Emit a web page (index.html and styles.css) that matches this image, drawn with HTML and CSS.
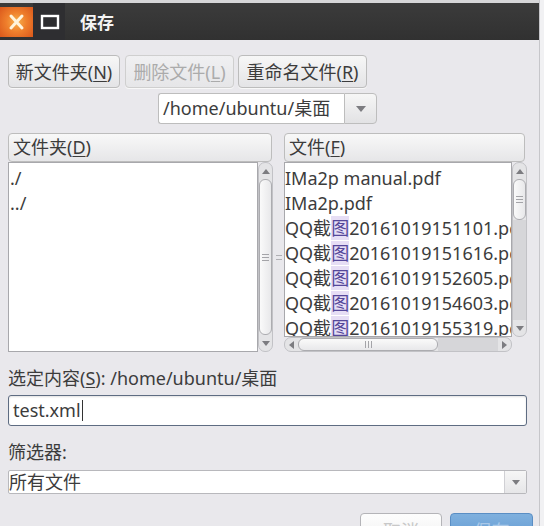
FILE: index.html
```html
<!DOCTYPE html>
<html>
<head>
<meta charset="utf-8">
<link rel="stylesheet" href="styles.css">
</head>
<body>
<div class="window">
  <div class="titlebar">
    <div class="close">
      <svg width="33" height="30" viewBox="0 0 33 30"><path d="M11 9 L22 21 M22 9 L11 21" stroke="#fff4dc" stroke-width="3" stroke-linecap="round"/></svg>
    </div>
    <div class="maxbtn">
      <svg width="32" height="30" viewBox="0 0 32 30"><rect x="9" y="9" width="16" height="12" fill="none" stroke="#ffffff" stroke-width="2.4"/></svg>
    </div>
    <div class="title">保存</div>
  </div>

  <div class="main">
    <div class="toolbar">
      <div class="btn b1">新文件夹(<u>N</u>)</div>
      <div class="btn b2 disabled">删除文件(<u>L</u>)</div>
      <div class="btn b3">重命名文件(<u>R</u>)</div>
    </div>

    <div class="pathrow">
      <div class="pathtext">/home/ubuntu/桌面</div>
      <div class="pathbtn"><span class="tri-down"></span></div>
    </div>

    <div class="panes">
      <div class="pane left">
        <div class="header hl-left">文件夹(<u>D</u>)</div>
        <div class="listwrap">
          <div class="list dirs">
            <div class="item">./</div>
            <div class="item">../</div>
          </div>
          <div class="vscroll">
            <div class="arrow"><span class="tri-up"></span></div>
            <div class="vthumb full"><span class="grip-h"></span></div>
            <div class="arrow"><span class="tri-down sm"></span></div>
          </div>
        </div>
      </div>

      <div class="divider"><span class="handle"></span></div>

      <div class="pane right">
        <div class="header hr-right">文件(<u>F</u>)</div>
        <div class="filegrid">
          <div class="list files">
            <div class="item">IMa2p manual.pdf</div>
            <div class="item">IMa2p.pdf</div>
            <div class="item">QQ截<span class="hl">图</span>20161019151101.pdf</div>
            <div class="item">QQ截<span class="hl">图</span>20161019151616.pdf</div>
            <div class="item">QQ截<span class="hl">图</span>20161019152605.pdf</div>
            <div class="item">QQ截<span class="hl">图</span>20161019154603.pdf</div>
            <div class="item">QQ截<span class="hl">图</span>20161019155319.pdf</div>
          </div>
          <div class="vscroll short">
            <div class="arrow"><span class="tri-up"></span></div>
            <div class="vthumb small"><span class="grip-h"></span></div>
            <div class="trough-v"></div>
            <div class="arrow"><span class="tri-down sm"></span></div>
          </div>
          <div class="hscroll">
            <div class="harrow"><span class="tri-left"></span></div>
            <div class="hthumb"><span class="grip-v"></span></div>
            <div class="trough-h"></div>
            <div class="harrow"><span class="tri-right"></span></div>
          </div>
          <div class="corner"></div>
        </div>
      </div>
    </div>

    <div class="label sel">选定内容(<u>S</u>): /home/ubuntu/桌面</div>
    <div class="entry">test.xml<span class="caret"></span></div>

    <div class="label filt">筛选器:</div>
    <div class="combo">
      <div class="combotext">所有文件</div>
      <div class="combobtn"><span class="tri-down sm"></span></div>
    </div>

    <div class="actions">
      <div class="abtn cancel">取消</div>
      <div class="abtn save">保存</div>
    </div>
  </div>
</div>
</body>
</html>
```

FILE: styles.css
```css
* { box-sizing: border-box; margin: 0; padding: 0; }
html, body {
  width: 544px; height: 526px; overflow: hidden;
  background: #f1f1f3;
}
body {
  font-family: "Noto Sans", "Noto Sans CJK SC", sans-serif;
  color: #3c3c3c;
  font-size: 18px;
}
u { text-decoration-thickness: 1px; text-underline-offset: 2px; }

.window {
  width: 540px; height: 526px;
  background: #e9e8ec;
  border-right: 1px solid #c6c6ca;
  overflow: hidden;
}

/* title bar */
.titlebar {
  height: 40px;
  border-top: 3px solid #d6d6d8;
  background: linear-gradient(#3b3b3b, #313131);
  display: flex; align-items: center;
}
.close {
  width: 33px; height: 30px;
  background: radial-gradient(circle at 50% 50%, #f7b24c 0, #ef7f2c 45%, #da571b 100%);
  display: flex; align-items: center; justify-content: center;
}
.maxbtn {
  width: 32px; height: 37px;
  background: #2e2e31;
  display: flex; align-items: center; justify-content: center;
}
.title {
  margin-left: 15px;
  color: #f4f4f4; font-weight: bold; font-size: 17px;
}

.main { width: 527px; padding: 15px 0 0 8px; }

/* buttons */
.toolbar { display: flex; height: 33px; }
.btn {
  height: 33px;
  border: 1px solid #bcbcbc; border-radius: 4px;
  background: linear-gradient(#f7f7f7, #e4e4e6);
  display: flex; align-items: center; justify-content: center;
  line-height: 1; white-space: nowrap;
  box-shadow: 0 1px 0 #f8f8f8;
}
.b1 { width: 112px; margin-right: 5px; }
.b2 { width: 109px; margin-right: 4px; }
.b3 { width: 129px; }
.disabled { color: #ababab; border-color: #cfcfcf; background: linear-gradient(#f0f0f2, #e6e6e8); }

/* path combo */
.pathrow { margin-top: 5px; display: flex; justify-content: center; height: 31px; }
.pathtext {
  width: 186px; height: 31px;
  background: #fff;
  border: 1px solid #bdbdbd; border-right: none;
  border-radius: 3px 0 0 3px;
  padding-left: 4px; line-height: 29px;
  white-space: nowrap;
}
.pathbtn {
  width: 33px; height: 31px;
  border: 1px solid #bdbdbd; border-radius: 0 4px 4px 0;
  background: linear-gradient(#f6f6f6, #e2e2e4);
  display: flex; align-items: center; justify-content: center;
}

/* triangles */
.tri-down { width: 0; height: 0; border-left: 5px solid transparent; border-right: 5px solid transparent; border-top: 6px solid #7c7c80; }
.tri-down.sm { border-left-width: 4px; border-right-width: 4px; border-top-width: 5px; }
.tri-up { width: 0; height: 0; border-left: 4px solid transparent; border-right: 4px solid transparent; border-bottom: 5px solid #7c7c80; }
.tri-left { width: 0; height: 0; border-top: 4px solid transparent; border-bottom: 4px solid transparent; border-right: 5px solid #7c7c80; }
.tri-right { width: 0; height: 0; border-top: 4px solid transparent; border-bottom: 4px solid transparent; border-left: 5px solid #7c7c80; }

/* panes */
.panes {
  margin-top: 9px;
  display: grid;
  grid-template-columns: 265px 11px 243px;
  height: 219px;
}
.pane { display: flex; flex-direction: column; }
.header {
  height: 29px;
  border: 1px solid #bdbdbd; border-radius: 4px;
  background: linear-gradient(#f8f8f8, #e6e6e8);
  padding-left: 4px; line-height: 27px;
}
.hl-left { width: 264px; }
.hr-right { width: 241px; }

.listwrap { display: flex; height: 190px; }
.list {
  background: #fff;
  border: 1px solid #a8a8ac;
  overflow: hidden;
  padding-top: 3px;
}
.dirs { width: 250px; height: 190px; padding-left: 1px; }
.item { height: 25px; line-height: 25px; white-space: nowrap; }

.vscroll {
  width: 15px;
  background: #e4e4e6;
  border: 1px solid #c2c2c6; border-radius: 7px;
  display: flex; flex-direction: column; align-items: center;
  padding: 0 0;
  overflow: hidden;
}
.arrow { height: 16px; width: 100%; display: flex; align-items: center; justify-content: center; flex: none; }
.vthumb {
  width: 13px;
  border: 1px solid #acacb0; border-radius: 6px;
  background: linear-gradient(90deg, #fafafa, #e8e8ea);
  display: flex; align-items: center; justify-content: center;
  flex: none;
}
.vthumb.full { flex: 1; }
.vthumb.small { height: 41px; }
.trough-v { flex: 1; width: 100%; background: #d6d6d9; }
.grip-h {
  width: 7px; height: 7px;
  border-top: 1px solid #a4a4a8; border-bottom: 1px solid #a4a4a8;
  background: linear-gradient(#a4a4a8, #a4a4a8) center / 100% 1px no-repeat;
}
.grip-v {
  width: 7px; height: 7px;
  border-left: 1px solid #a4a4a8; border-right: 1px solid #a4a4a8;
  background: linear-gradient(#a4a4a8, #a4a4a8) center / 1px 100% no-repeat;
}

.divider { display: flex; align-items: center; justify-content: center; padding-top: 29px; }
.handle {
  width: 6px; height: 5px;
  border-top: 1px solid #b0b0b4; border-bottom: 1px solid #b0b0b4;
}

.filegrid {
  display: grid;
  grid-template-columns: 228px 15px;
  grid-template-rows: 175px 15px;
}
.files { padding-left: 0; }
.vscroll.short { height: 175px; }
.hscroll {
  height: 15px;
  background: #e4e4e6;
  border: 1px solid #c2c2c6; border-radius: 7px;
  display: flex; align-items: center;
  overflow: hidden;
}
.harrow { width: 13px; height: 100%; display: flex; align-items: center; justify-content: center; flex: none; }
.hthumb {
  width: 140px; height: 13px;
  border: 1px solid #acacb0; border-radius: 6px;
  background: linear-gradient(#fafafa, #e8e8ea);
  display: flex; align-items: center; justify-content: center;
  flex: none;
}
.trough-h { flex: 1; height: 100%; background: #d6d6d9; }
.corner { background: #e9e8ec; }

.hl { color: #55479a; background: #e6def5; }

/* bottom */
.label { height: 26px; line-height: 26px; white-space: nowrap; }
.sel { margin-top: 13px; }
.filt { margin-top: 13px; }
.entry {
  margin-top: 4px;
  width: 519px; height: 31px;
  background: #fff;
  border: 1px solid #5e6c82; border-radius: 3px;
  box-shadow: inset 0 1px 2px rgba(0,0,0,0.12);
  padding-left: 4px; line-height: 29px;
  display: flex; align-items: center;
}
.caret { width: 1px; height: 21px; background: #333; margin-left: 1px; }

.combo {
  margin-top: 5px;
  width: 519px; height: 24px;
  display: flex;
  border: 1px solid #b8b8bc; border-radius: 2px;
  background: #fff;
}
.combotext { flex: 1; line-height: 22px; padding-left: 0; }
.combobtn {
  width: 22px;
  border-left: 1px solid #d0d0d4;
  background: linear-gradient(#f6f6f6, #e6e6e8);
  display: flex; align-items: center; justify-content: center;
}

.actions { margin-top: 19px; margin-right: -6px; display: flex; justify-content: flex-end; height: 34px; }
.abtn {
  height: 34px; border-radius: 4px;
  display: flex; align-items: center; justify-content: center;
}
.cancel { width: 82px; margin-right: 8px; background: linear-gradient(#fdfdfd, #f0f0f0); border: 1px solid #b4b4b8; color: #c8c8c8; }
.save { width: 83px; background: linear-gradient(#7fb0de, #5c95cf); border: 1px solid #5a8ec4; color: #a9c8e8; }
```
